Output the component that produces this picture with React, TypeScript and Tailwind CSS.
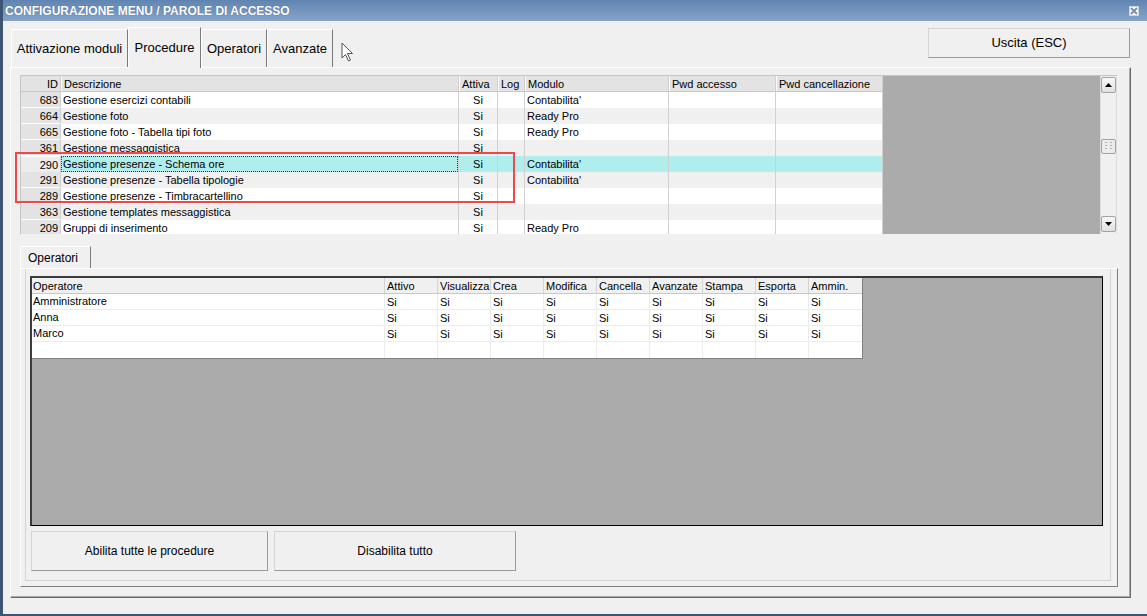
import React from 'react';

const font = { fontFamily: '"Liberation Sans", Arial, sans-serif' };

const procRows = [
  { id: '683', desc: 'Gestione esercizi contabili', mod: "Contabilita'" },
  { id: '664', desc: 'Gestione foto', mod: 'Ready Pro' },
  { id: '665', desc: 'Gestione foto - Tabella tipi foto', mod: 'Ready Pro' },
  { id: '361', desc: 'Gestione messaggistica', mod: '' },
  { id: '290', desc: 'Gestione presenze - Schema ore', mod: "Contabilita'", selected: true },
  { id: '291', desc: 'Gestione presenze - Tabella tipologie', mod: "Contabilita'" },
  { id: '289', desc: 'Gestione presenze - Timbracartellino', mod: '' },
  { id: '363', desc: 'Gestione templates messaggistica', mod: '' },
  { id: '209', desc: 'Gruppi di inserimento', mod: 'Ready Pro' },
];

const opHeaders = ['Attivo', 'Visualizza', 'Crea', 'Modifica', 'Cancella', 'Avanzate', 'Stampa', 'Esporta', 'Ammin.'];
const operators = ['Amministratore', 'Anna', 'Marco', ''];

const cell = 'shrink-0 h-full border-r border-[#d0d0d0] px-[2px] leading-[16px] whitespace-nowrap overflow-hidden';

function Arrow({ down }: { down?: boolean }) {
  return (
    <svg width="7" height="4" viewBox="0 0 7 4">
      <polygon points={down ? '0,0 7,0 3.5,4' : '0,4 7,4 3.5,0'} fill="#000" />
    </svg>
  );
}

function ScrollButton({ down }: { down?: boolean }) {
  return (
    <div className="w-[15px] h-[16px] shrink-0 rounded-[2px] border border-[#a3a3a3] bg-gradient-to-b from-[#f8f8f8] to-[#e0e0e0] flex items-center justify-center">
      <Arrow down={down} />
    </div>
  );
}

function ProcGrid() {
  return (
    <div className="relative w-[1097px] h-[159px]">
      <div className="w-full h-full flex border-t border-l border-[#c4c4c4] overflow-hidden">
        <div className="flex-1 bg-[#ababab] overflow-hidden">
          <div className="w-[862px] text-[11px] text-black">
            <div className="flex h-[16px] bg-[#e3e3e3] border-b border-[#c8c8c8]">
              <div className={`${cell} w-[40px] text-right border-[#bdbdbd]`}>ID</div>
              <div className={`${cell} w-[398px] border-[#bdbdbd] border-l border-l-white`}>Descrizione</div>
              <div className={`${cell} w-[39px] border-[#bdbdbd] border-l border-l-white`}>Attiva</div>
              <div className={`${cell} w-[27px] border-[#bdbdbd] border-l border-l-white`}>Log</div>
              <div className={`${cell} w-[144px] border-[#bdbdbd] border-l border-l-white`}>Modulo</div>
              <div className={`${cell} w-[107px] border-[#bdbdbd] border-l border-l-white`}>Pwd accesso</div>
              <div className={`${cell} w-[107px] border-[#bdbdbd] border-l border-l-white`}>Pwd cancellazione</div>
            </div>
            {procRows.map((r, i) => {
              const bg = r.selected ? 'bg-[#b0eeee]' : i % 2 === 1 ? 'bg-[#f0f0f0]' : 'bg-white';
              return (
                <div key={r.id} className={`flex h-[16px] ${bg}`}>
                  <div
                    className={`${cell} w-[40px] text-right border-[#c4c4c4] ${
                      r.selected ? 'bg-[#ececec] border-t border-t-white' : 'bg-[#e3e3e3] border-b border-b-white'
                    }`}
                  >
                    {r.id}
                  </div>
                  <div className={`${cell} w-[398px]`}>
                    {r.selected ? (
                      <div className="h-full border border-dotted border-[#333] leading-[14px] -mx-[2px] px-[1px]">{r.desc}</div>
                    ) : (
                      r.desc
                    )}
                  </div>
                  <div className={`${cell} w-[39px] text-center`}>Si</div>
                  <div className={`${cell} w-[27px]`}></div>
                  <div className={`${cell} w-[144px]`}>{r.mod}</div>
                  <div className={`${cell} w-[107px]`}></div>
                  <div className={`${cell} w-[107px]`}></div>
                </div>
              );
            })}
          </div>
        </div>
        <div className="w-[17px] shrink-0 bg-[#f0f0f0] border-l border-r border-[#dcdcdc] flex flex-col pt-[1px] pb-[2px]">
          <ScrollButton />
          <div className="h-[46px] shrink-0" />
          <div className="w-[15px] h-[15px] shrink-0 rounded-[2px] border border-[#a3a3a3] bg-[#ececec] flex items-center justify-center">
            <svg width="7" height="9" viewBox="0 0 7 9">
              {[0, 3, 6].map((y) => (
                <g key={y}>
                  <rect x="0" y={y} width="2" height="1" fill="#b0b0b0" />
                  <rect x="5" y={y} width="2" height="1" fill="#b0b0b0" />
                </g>
              ))}
            </svg>
          </div>
          <div className="flex-1" />
          <ScrollButton down />
        </div>
      </div>
      <div className="absolute left-[-5px] top-[77px] w-[500px] h-[51px] border-2 border-[#f04848] pointer-events-none" />
    </div>
  );
}

function OperatorGrid() {
  return (
    <div className="w-[1073px] h-[250px] bg-[#ababab] border-t-2 border-l-2 border-[#3a3a3a] border-r border-b border-r-black border-b-black">
      <div className="w-[831px] text-[11px] text-black border-r border-b border-[#808080] bg-white">
        <div className="flex h-[16px] bg-[#f0f0f0] border-b border-[#c8c8c8]">
          <div className="w-[353px] shrink-0 border-r border-[#d4d4d4] px-[1px] leading-[16px]">Operatore</div>
          {opHeaders.map((h) => (
            <div key={h} className="w-[53px] shrink-0 border-r border-[#d4d4d4] last:border-r-0 px-[2px] leading-[16px] whitespace-nowrap overflow-hidden">
              {h}
            </div>
          ))}
        </div>
        {operators.map((o, i) => (
          <div key={i} className="flex h-[16px] border-b border-[#ececec] last:border-b-0">
            <div className="w-[353px] shrink-0 border-r border-[#ececec] px-[1px] leading-[15px]">{o}</div>
            {opHeaders.map((h) => (
              <div key={h} className="w-[53px] shrink-0 border-r border-[#ececec] last:border-r-0 px-[2px] leading-[16px]">
                {o ? 'Si' : ''}
              </div>
            ))}
          </div>
        ))}
      </div>
    </div>
  );
}

function Button({ label, className }: { label: string; className: string }) {
  return (
    <div
      className={`${className} flex items-center justify-center text-[12px] text-black bg-[#f0f0f0] border border-t-[#d4d4d4] border-l-[#d4d4d4] border-r-[#9a9a9a] border-b-[#9a9a9a]`}
    >
      {label}
    </div>
  );
}

function Tab({ label, className, selected }: { label: string; className: string; selected?: boolean }) {
  return (
    <div
      className={`${className} shrink-0 flex items-center justify-center text-[13px] text-black bg-[#f0f0f0] border-l border-t border-white border-r border-r-[#7a7a7a] ${
        selected ? 'h-[41px] -mb-[1px] relative z-10' : 'h-[38px]'
      }`}
    >
      {label}
    </div>
  );
}

export default function App() {
  return (
    <div style={font} className="w-[1147px] h-[616px] bg-[#f0f0f0] border-l-[3px] border-b-2 border-[#3d5574] flex flex-col overflow-hidden">
      <div className="h-[21px] shrink-0 bg-gradient-to-b from-[#6084b1] to-[#86a4c8] flex items-center pl-[2px] pr-[8px]">
        <span className="text-[12px] font-bold text-white [text-shadow:0_0_1px_rgba(40,60,90,0.6)]">
          CONFIGURAZIONE MENU / PAROLE DI ACCESSO
        </span>
        <div className="flex-1" />
        <div className="w-[10px] h-[10px] bg-white border border-[#c8d4e4] flex items-center justify-center">
          <svg width="8" height="8" viewBox="0 0 8 8">
            <path d="M1 1 L7 7 M7 1 L1 7" stroke="#7d8fa8" strokeWidth="2" />
          </svg>
        </div>
      </div>

      <div className="h-[46px] shrink-0 flex items-end pl-[8px] pr-[17px]">
        <Tab label="Attivazione moduli" className="w-[117px]" />
        <Tab label="Procedure" className="w-[73px]" selected />
        <Tab label="Operatori" className="w-[66px]" />
        <Tab label="Avanzate" className="w-[66px]" />
        <div className="self-start mt-[21px] ml-[8px]">
          <svg width="13" height="20" viewBox="0 0 13 20">
            <path d="M1 1 L1 16 L4.5 12.5 L7.5 19 L9.5 18 L6.5 11.5 L11.5 11.5 Z" fill="#fff" stroke="#555" strokeWidth="1" strokeLinejoin="round" />
          </svg>
        </div>
        <div className="flex-1" />
        <div className="self-start mt-[7px]">
          <Button label="Uscita (ESC)" className="w-[202px] h-[30px] text-[13px]" />
        </div>
      </div>

      <div className="ml-[7px] w-[1121px] h-[531px] shrink-0 border-l border-t border-white border-r border-b border-r-[#6a6a6a] border-b-[#6a6a6a] shadow-[inset_-1px_-1px_0_#a8a8a8] pl-[9px] pt-[7px]">
        <ProcGrid />
        <div className="mt-[12px] h-[22px] flex">
          <div className="w-[71px] h-[22px] flex items-center pl-[7px] text-[12px] text-black border-l border-t border-white border-r border-r-[#7a7a7a]">
            Operatori
          </div>
        </div>
        <div className="w-[1098px] h-[319px] border-l border-t border-white border-r border-b border-r-[#7f7f7f] border-b-[#7f7f7f] pl-[4px] pr-[6px] pb-[5px]">
          <div className="h-full border-l border-r border-b border-[#d4d4d4] pl-[4px] pr-[7px] pt-[7px]">
            <OperatorGrid />
            <div className="mt-[5px] flex gap-[6px] pl-[1px]">
              <Button label="Abilita tutte le procedure" className="w-[237px] h-[40px]" />
              <Button label="Disabilita tutto" className="w-[242px] h-[40px]" />
            </div>
          </div>
        </div>
      </div>
    </div>
  );
}
